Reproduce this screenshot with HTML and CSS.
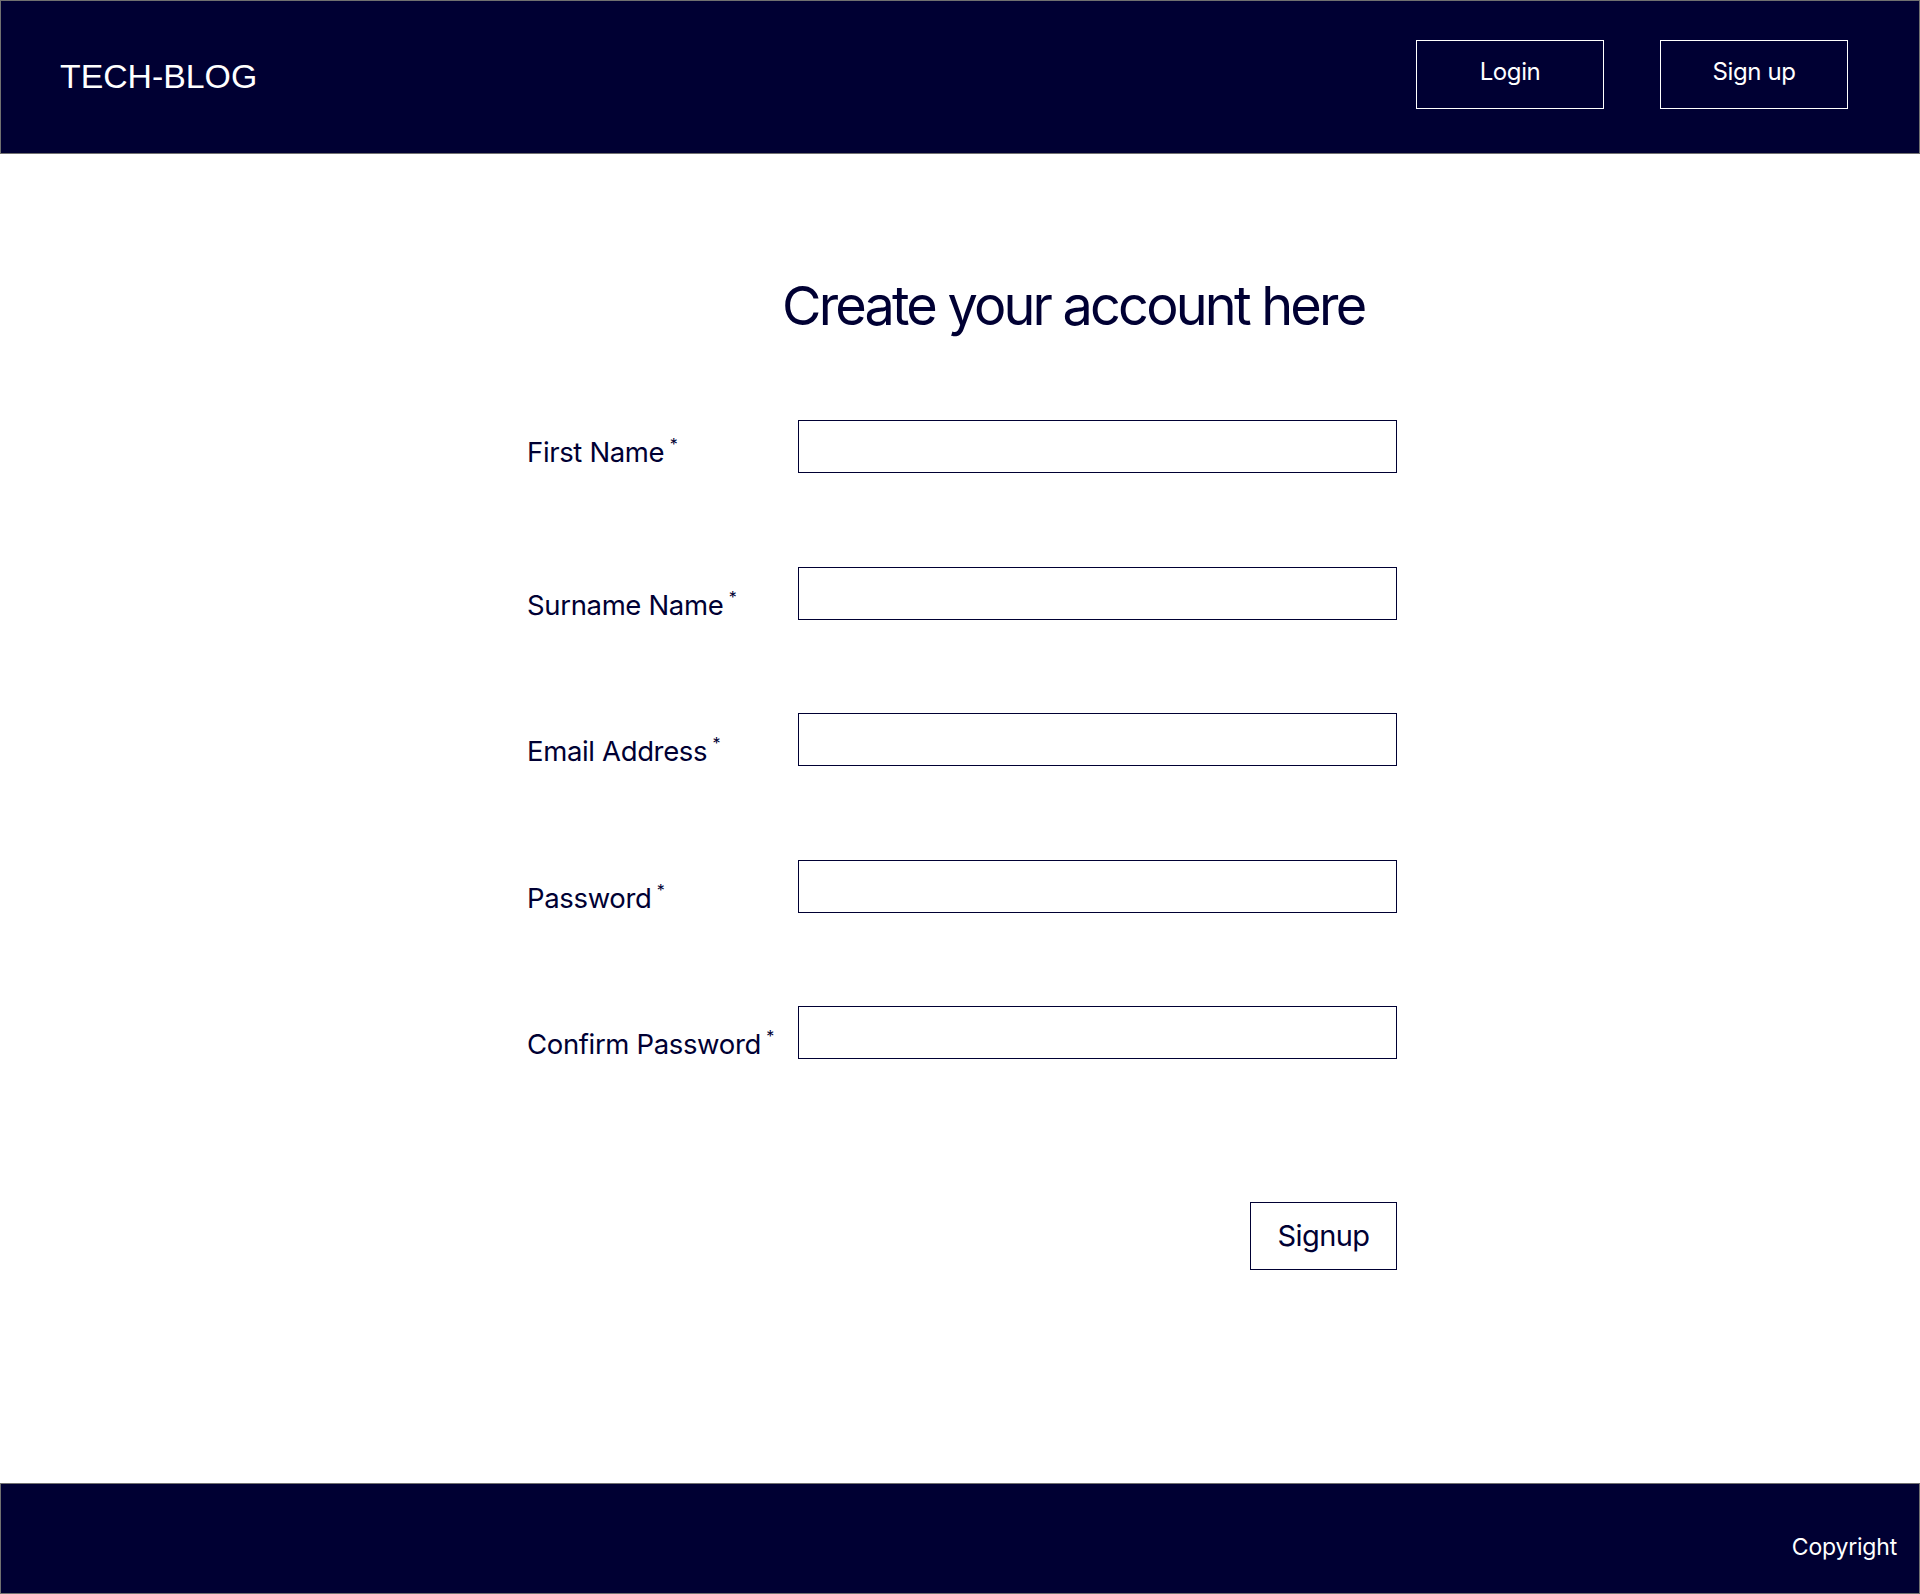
FILE: index.html
```html
<!DOCTYPE html>
<html lang="en">
<head>
<meta charset="utf-8">
<title>TECH-BLOG – Sign up</title>
<link rel="stylesheet" href="styles.css">
</head>
<body>
<header class="topbar">
  <div class="logo">TECH-BLOG</div>
  <nav class="nav">
    <button class="nav-btn" type="button">Login</button>
    <button class="nav-btn" type="button">Sign up</button>
  </nav>
</header>
<main class="content">
  <form class="signup-form">
    <h1 class="title">Create your account here</h1>
    <div class="fields">
      <label class="field-label field-label--first" for="fn">First Name <sup>*</sup></label>
      <input class="field-input" id="fn" type="text">
      <label class="field-label" for="sn">Surname Name <sup>*</sup></label>
      <input class="field-input" id="sn" type="text">
      <label class="field-label" for="em">Email Address <sup>*</sup></label>
      <input class="field-input" id="em" type="email">
      <label class="field-label" for="pw">Password <sup>*</sup></label>
      <input class="field-input" id="pw" type="password">
      <label class="field-label" for="cpw">Confirm Password <sup>*</sup></label>
      <input class="field-input" id="cpw" type="password">
    </div>
    <div class="actions">
      <button class="submit-btn" type="button">Signup</button>
    </div>
  </form>
</main>
<footer class="footer">
  <span class="copyright">Copyright</span>
</footer>
</body>
</html>
```

FILE: styles.css
```css
* { box-sizing: border-box; }

html, body {
  margin: 0;
  padding: 0;
}

body {
  min-height: 100vh;
  display: flex;
  flex-direction: column;
  background: #ffffff;
  color: #000033;
  font-family: Inter, "Noto Sans", sans-serif;
}

.topbar {
  height: 154px;
  background: #000033;
  border: 1px solid #707070;
  display: flex;
  align-items: center;
  justify-content: space-between;
  padding: 0 71px 0 59px;
}

.logo {
  font-family: "Liberation Sans", Arial, sans-serif;
  font-size: 33.8px;
  color: #ffffff;
  line-height: 1;
}

.nav {
  display: flex;
  gap: 56px;
  margin-bottom: 6px;
}

.nav-btn {
  width: 188px;
  height: 69px;
  background: transparent;
  border: 1px solid #ffffff;
  color: #ffffff;
  font-family: Inter, sans-serif;
  font-size: 24px;
  letter-spacing: -0.4px;
  padding: 0 0 5px;
}

.content {
  flex: 1;
  padding-top: 119px;
}

.signup-form {
  width: 870px;
  margin-left: calc(50% - 433px);
}

.title {
  margin: 0;
  padding-left: 255px;
  font-size: 54px;
  font-weight: 400;
  line-height: 66px;
  letter-spacing: -2.8px;
  white-space: nowrap;
}

.fields {
  margin-top: 81px;
  display: grid;
  grid-template-columns: 271px 599px;
  row-gap: 93.5px;
}

.field-label {
  font-size: 27.5px;
  line-height: 28px;
  letter-spacing: -0.35px;
  padding-top: 24px;
  white-space: nowrap;
}

.field-label--first {
  padding-top: 18px;
}

.field-label sup {
  font-size: 16px;
  line-height: 0;
  vertical-align: 0;
  position: relative;
  top: -12px;
  margin-left: -2px;
}

.field-input {
  height: 53px;
  border: 1px solid #000033;
  background: #ffffff;
  margin: 0;
}

.actions {
  display: flex;
  justify-content: flex-end;
  margin-top: 143px;
}

.submit-btn {
  width: 147px;
  height: 68px;
  border: 1px solid #000033;
  background: #ffffff;
  color: #000033;
  font-family: Inter, sans-serif;
  font-size: 29px;
  letter-spacing: -0.6px;
  padding: 0 0 2px;
}

.footer {
  height: 111px;
  background: #000033;
  border: 1px solid #707070;
  display: flex;
  justify-content: flex-end;
  align-items: flex-end;
  padding: 0 22px 34px;
}

.copyright {
  color: #ffffff;
  font-size: 23px;
  letter-spacing: -0.2px;
  line-height: 24px;
}
```
